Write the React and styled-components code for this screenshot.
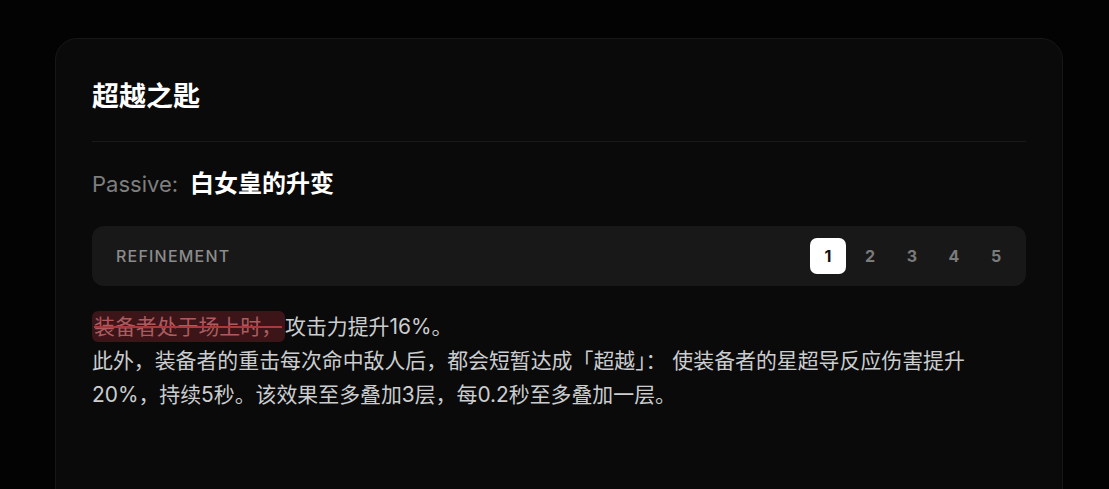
import React from "react";
import styled, { createGlobalStyle } from "styled-components";

const Global = createGlobalStyle`
  html, body { margin: 0; padding: 0; background: #030303; }
  body { font-family: Inter, "Noto Sans CJK SC", sans-serif; }
  #root { padding-top: 38px; padding-left: 55px; }
`;

const Card = styled.section`
  box-sizing: border-box;
  width: 1008px;
  min-height: 480px;
  background: #0a0a0a;
  border: 1px solid #171717;
  border-radius: 22px;
  padding: 40px 36px 36px;
  display: flex;
  flex-direction: column;
`;

const Title = styled.h1`
  margin: 0;
  font-family: Inter, "Noto Sans CJK SC", sans-serif;
  font-size: 27px;
  line-height: 36px;
  font-weight: 700;
  color: #ffffff;
`;

const Divider = styled.hr`
  border: 0;
  height: 1px;
  background: #1a1a1a;
  margin: 26px 0 26px;
`;

const PassiveRow = styled.div`
  display: flex;
  align-items: baseline;
  gap: 12px;
  line-height: 32px;
`;

const PassiveLabel = styled.span`
  font-family: Inter, sans-serif;
  font-size: 22px;
  color: #7e7e7e;
  font-weight: 400;
`;

const PassiveName = styled.span`
  font-family: Inter, "Noto Sans CJK SC", sans-serif;
  font-size: 24px;
  font-weight: 700;
  color: #ffffff;
`;

const RefineBar = styled.div`
  margin-top: 26px;
  height: 60px;
  box-sizing: border-box;
  background: #181818;
  border-radius: 12px;
  padding: 0 12px 0 24px;
  display: flex;
  align-items: center;
  justify-content: space-between;
`;

const RefineLabel = styled.span`
  font-family: Inter, sans-serif;
  font-size: 16px;
  letter-spacing: 1.2px;
  color: #8c8c8c;
  font-weight: 500;
`;

const Levels = styled.div`
  display: flex;
  gap: 6px;
`;

const LevelButton = styled.button`
  width: 36px;
  height: 36px;
  border: 0;
  border-radius: 7px;
  padding: 0;
  font-family: Inter, sans-serif;
  font-size: 16px;
  font-weight: 700;
  cursor: pointer;
  background: ${(p) => (p.$active ? "#ffffff" : "transparent")};
  color: ${(p) => (p.$active ? "#111111" : "#7b7b7b")};
`;

const Description = styled.p`
  margin: 24px 0 0;
  font-family: Inter, "Noto Sans CJK SC", sans-serif;
  font-size: 20.9px;
  line-height: 34px;
  color: #cbcdcf;
`;

const Removed = styled.span`
  background: #3b1517;
  color: #ac5c5f;
  text-decoration: line-through;
  text-decoration-color: #a83a3c;
  text-decoration-thickness: 2px;
  border-radius: 6px;
  padding: 3px 3px 3px 2px;
`;

export default function App() {
  const levels = [1, 2, 3, 4, 5];
  return (
    <>
      <Global />
      <Card>
        <Title>超越之匙</Title>
        <Divider />
        <PassiveRow>
          <PassiveLabel>Passive:</PassiveLabel>
          <PassiveName>白女皇的升变</PassiveName>
        </PassiveRow>
        <RefineBar>
          <RefineLabel>REFINEMENT</RefineLabel>
          <Levels>
            {levels.map((l) => (
              <LevelButton key={l} $active={l === 1}>
                {l}
              </LevelButton>
            ))}
          </Levels>
        </RefineBar>
        <Description>
          <Removed>装备者处于场上时，</Removed>攻击力提升16%。
          <br />
          此外，装备者的重击每次命中敌人后，都会短暂达成「超越」： 使装备者的星超导反应伤害提升20%，持续5秒。该效果至多叠加3层，每0.2秒至多叠加一层。
        </Description>
      </Card>
    </>
  );
}
